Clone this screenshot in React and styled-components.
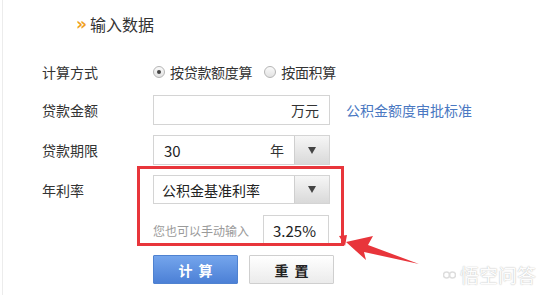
import React from 'react'
import styled, { createGlobalStyle } from 'styled-components'

const GlobalStyle = createGlobalStyle`
  body {
    margin: 0;
    background: #fff;
    font-family: 'Noto Sans CJK SC', 'Noto Sans', sans-serif;
    color: #333;
  }
`

const Page = styled.div`
  position: relative;
  width: 537px;
  height: 295px;
  overflow: hidden;
  border-left: 1px solid #ececec;
  margin-left: 2px;
  box-sizing: border-box;
`

const Title = styled.div`
  display: flex;
  align-items: center;
  height: 24px;
  margin: 12px 0 0 73px;
  font-size: 16px;
  color: #333;
  gap: 3px;
`

const Chevron = styled.span`
  color: #f0a020;
  font-weight: bold;
  font-size: 17px;
  line-height: 1;
  font-family: 'DejaVu Sans', sans-serif;
`

const Form = styled.div`
  display: flex;
  flex-direction: column;
  padding-left: 39px;
  margin-top: 21px;
`

const Row = styled.div`
  display: flex;
  align-items: center;
  height: ${p => p.h || 30}px;
  margin-bottom: ${p => p.mb ?? 10}px;
`

const Label = styled.div`
  width: 111px;
  font-size: 14px;
  color: #333;
`

const RadioGroup = styled.label`
  display: flex;
  align-items: center;
  font-size: 14px;
  letter-spacing: -0.3px;
  margin-right: 12px;
  gap: 5px;
`

const Radio = styled.span`
  width: 10px;
  height: 10px;
  border-radius: 50%;
  border: 1px solid #b5b5b5;
  background: linear-gradient(#fafafa, #e2e2e2);
  display: flex;
  align-items: center;
  justify-content: center;
  &::after {
    content: '';
    width: 4px;
    height: 4px;
    border-radius: 50%;
    background: ${p => (p.checked ? '#444' : 'transparent')};
  }
`

const Field = styled.div`
  display: flex;
  align-items: center;
  width: ${p => p.w}px;
  height: 100%;
  box-sizing: border-box;
  border: 1px solid #d4d4d4;
  background: #fff;
  font-size: ${p => p.fs || 15}px;
  color: #222;
`

const FieldText = styled.span`
  flex: 1;
  padding: 0 ${p => p.pr || 8}px 0 ${p => p.pl || 10}px;
  text-align: ${p => p.align || 'left'};
`

const Unit = styled.span`
  font-size: 14px;
  color: #333;
  margin-right: 10px;
`

const DropButton = styled.div`
  width: 34px;
  height: 100%;
  border-left: 1px solid #cfcfcf;
  background: linear-gradient(#f6f6f6, #d9d9d9);
  display: flex;
  align-items: center;
  justify-content: center;
  &::after {
    content: '';
    border-left: 4.5px solid transparent;
    border-right: 4.5px solid transparent;
    border-top: 7px solid #444;
  }
`

const Link = styled.a`
  margin-left: 16px;
  font-size: 14px;
  color: #4a78c2;
  text-decoration: none;
`

const Hint = styled.span`
  font-size: 12px;
  color: #9a9a9a;
  width: 110px;
`

const Button = styled.button`
  width: ${p => p.w || 85}px;
  height: 29px;
  margin-right: 11px;
  box-sizing: border-box;
  font-family: inherit;
  font-size: 14px;
  font-weight: bold;
  letter-spacing: 6px;
  text-indent: 6px;
  border-radius: 1px;
  color: ${p => (p.primary ? '#fff' : '#222')};
  border: 1px solid ${p => (p.primary ? '#4f82d0' : '#cfcfcf')};
  background: ${p =>
    p.primary ? 'linear-gradient(#74a5ec, #4c80d6)' : 'linear-gradient(#ffffff, #ebebeb)'};
`

const Annotation = styled.div`
  position: absolute;
  left: 134px;
  top: 166px;
  width: 207px;
  height: 80px;
  box-sizing: border-box;
  border: 3px solid #e8353b;
  pointer-events: none;
`

const ArrowSvg = styled.svg`
  position: absolute;
  left: 0;
  top: 0;
  pointer-events: none;
`

const Watermark = styled.div`
  position: absolute;
  left: 440px;
  top: 261px;
  display: flex;
  align-items: center;
  gap: 4px;
  font-size: 19px;
  color: #fdfdfd;
  text-shadow: 0 0 1px rgba(0, 0, 0, 0.25), 0 0 2px rgba(0, 0, 0, 0.12);
`

export default function App() {
  return (
    <Page>
      <GlobalStyle />
      <Title>
        <Chevron>»</Chevron>
        输入数据
      </Title>
      <Form>
        <Row mb={8}>
          <Label>计算方式</Label>
          <RadioGroup>
            <Radio checked />
            按贷款额度算
          </RadioGroup>
          <RadioGroup>
            <Radio />
            按面积算
          </RadioGroup>
        </Row>
        <Row>
          <Label>贷款金额</Label>
          <Field w={177}>
            <FieldText align="right" pr={8} />
            <Unit>万元</Unit>
          </Field>
          <Link>公积金额度审批标准</Link>
        </Row>
        <Row>
          <Label>贷款期限</Label>
          <Field w={177}>
            <FieldText>30</FieldText>
            <Unit>年</Unit>
            <DropButton />
          </Field>
        </Row>
        <Row h={29} mb={11}>
          <Label>年利率</Label>
          <Field w={177} fs={14}>
            <FieldText pl={8}>公积金基准利率</FieldText>
            <DropButton />
          </Field>
        </Row>
        <Row mb={10}>
          <Label />
          <Hint>您也可以手动输入</Hint>
          <Field w={66}>
            <FieldText pl={9}>3.25%</FieldText>
          </Field>
        </Row>
        <Row h={29}>
          <Label />
          <Button primary>计算</Button>
          <Button>重置</Button>
        </Row>
      </Form>
      <Annotation />
      <ArrowSvg width="537" height="295">
        <polygon points="336,236 344,235 342,246" fill="#e8353b" />
        <polygon
          points="343,242 370,236 365,245 416,264 361,252 363,260"
          fill="#e8353b"
        />
      </ArrowSvg>
      <Watermark>
        <svg width="13" height="10" viewBox="0 0 13 10">
          <circle cx="3.5" cy="5" r="3" fill="none" stroke="#ddd" strokeWidth="1.5" />
          <circle cx="9.5" cy="5" r="3" fill="none" stroke="#ddd" strokeWidth="1.5" />
        </svg>
        悟空问答
      </Watermark>
    </Page>
  )
}
